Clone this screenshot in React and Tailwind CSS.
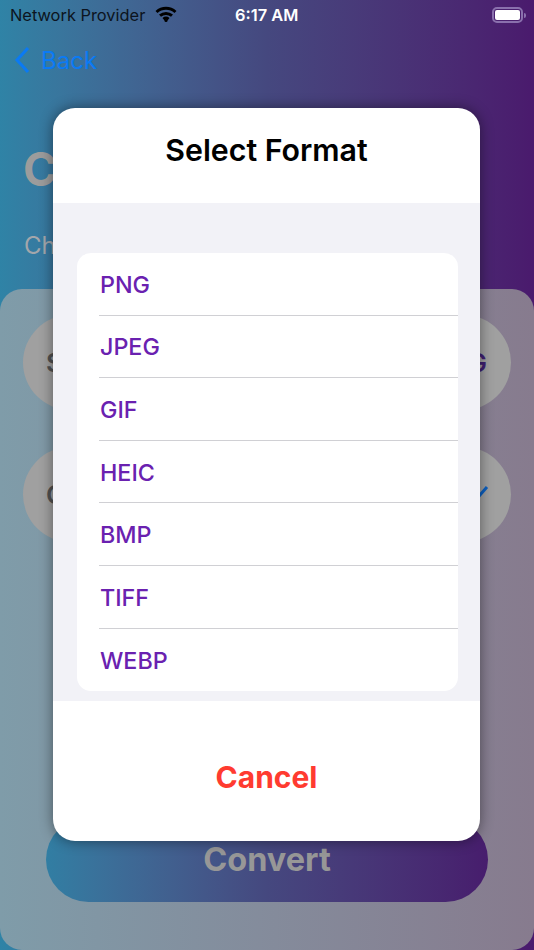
const formats = ["PNG", "JPEG", "GIF", "HEIC", "BMP", "TIFF", "WEBP"];

export default function App() {
  return (
    <div className="relative h-[950px] w-[534px] overflow-hidden bg-gradient-to-r from-[#2f83a6] via-[#45487f] to-[#4a1a6d] font-['Inter',sans-serif]">
      {/* Status bar */}
      <div className="flex h-[30px] items-center pl-[10px] pr-[8px] text-[16.400px]">
        <div className="flex w-[225px] items-center gap-[10px]">
          <span className="text-[#0c1420]">Network Provider</span>
          <svg width="22" height="17" viewBox="0 0 22 16" fill="none" stroke="#000" strokeWidth="3">
            <path d="M1.500 5.500C7 .6 15 .6 20.500 5.500" />
            <path d="M5 9.200c3.500-3 8.500-3 12 0" />
            <path d="M8.400 12.600c1.500-1.200 3.700-1.200 5.200 0" />
            <circle cx="11" cy="14" r="1.600" fill="#000" stroke="none" />
          </svg>
        </div>
        <span className="font-semibold text-white">6:17 AM</span>
        <div className="ml-auto flex items-center">
          <div className="h-[16px] w-[31px] rounded-[5px] border-2 border-[#8a70ad] p-[1px]">
            <div className="h-full w-full rounded-[2px] bg-white" />
          </div>
          <div className="ml-[1px] h-[5px] w-[2px] rounded-r-sm bg-[#8a70ad]" />
        </div>
      </div>

      {/* Nav */}
      <div className="flex h-[60px] items-center gap-[11px] pl-[14px]">
        <svg width="16" height="28" viewBox="0 0 16 28" fill="none" stroke="#0a7af5" strokeWidth="3">
          <path d="M14 2 3 14l11 12" />
        </svg>
        <span className="pt-[1px] text-[24px] text-[#0a7af5]">Back</span>
      </div>

      {/* Page behind the dialog */}
      <div className="pl-[23px] pt-[51px] text-[46px] leading-[56px] font-bold text-[#9c9c9c]">Convert</div>
      <div className="pl-[24px] pt-[34px] text-[24px] leading-[30px] text-[#a3a6ab]">Choose format</div>

      <div className="mt-[28px] flex h-[661px] flex-col rounded-[22px] bg-gradient-to-r from-[#7f9ca9] to-[#877b8e] px-[23px] pt-[26px]">
        <div className="flex h-[95px] items-center justify-between rounded-[48px] bg-[#a0a0a0] pl-[23px] pr-[24px] text-[26px] font-semibold">
          <span className="text-[#505050]">Source</span>
          <span className="text-[#3f1f72]">PNG</span>
        </div>
        <div className="mt-[37px] flex h-[95px] items-center justify-between rounded-[48px] bg-[#a0a0a0] pl-[23px] pr-[22px] text-[26px] font-semibold">
          <span className="text-[#505050]">Choose</span>
          <svg width="24" height="20" viewBox="0 0 24 20" fill="none" stroke="#0b5fc0" strokeWidth="3">
            <path d="m2 11 6 7L22 2" />
          </svg>
        </div>
        <div className="mx-[23px] mt-[275px] flex h-[85px] items-center justify-center rounded-[43px] bg-gradient-to-r from-[#317ea3] via-[#45487f] to-[#471d6d] pt-[2px] text-[32.500px] font-bold text-[#979797]">
          Convert
        </div>
      </div>

      {/* Dialog */}
      <div className="absolute left-[53px] top-[108px] flex h-[733px] w-[427px] flex-col overflow-hidden rounded-[22px] bg-white shadow-[0_0_14px_rgba(0,0,0,0.45)]">
        <div className="flex h-[95px] items-start justify-center pt-[22px] text-[30.300px] leading-[40px] font-semibold text-black">
          Select Format
        </div>
        <div className="h-[498px] bg-[#f2f2f7] pl-[24px] pr-[22px] pt-[50px]">
          <div className="rounded-[14px] bg-white pl-[22px]">
            {formats.map((f, i) => (
              <div
                key={f}
                className={`flex h-[62.600px] items-center pl-[1px] pt-[3px] text-[23.300px] font-[550] text-[#6a21b0] ${i < formats.length - 1 ? "border-b border-[#d0d0d4]" : ""}`}
              >
                {f}
              </div>
            ))}
          </div>
        </div>
        <div className="flex flex-1 items-center justify-center pt-[12px] text-[30px] font-bold text-[#ff3b30]">Cancel</div>
      </div>
    </div>
  );
}
